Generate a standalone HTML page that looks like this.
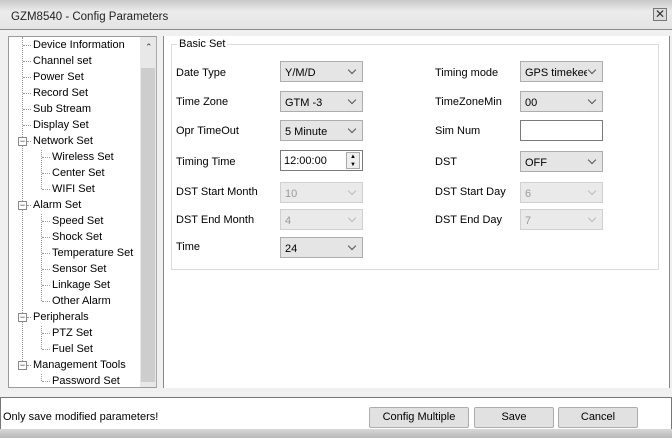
<!DOCTYPE html>
<html><head><style>
*{box-sizing:border-box;margin:0;padding:0}
body{width:672px;height:438px;overflow:hidden;font-family:"Liberation Sans",sans-serif;font-size:11px;color:#000;background:#f0f0f0;position:relative}
.abs{position:absolute}
.title{left:0;top:0;width:672px;height:30px;background:linear-gradient(#c9c9c9,#ececec 40%,#e4e4e4);border-bottom:1px solid #8a8a8a}
.title span{position:absolute;left:11px;top:11px;font-size:11.5px;color:#222}
.close{right:5px;top:8px;width:14px;height:13px;border:1px solid #777;background:#ddd;font-size:12px;line-height:11px;text-align:center;color:#333}
.tree{left:8px;top:36px;width:149px;height:352px;background:#fff;border:1px solid #9a9a9a;border-right:1px solid #aaa}
.sb{left:140px;top:37px;width:16px;height:350px;background:#e8e8e8}
.thumb{left:141px;top:68px;width:14px;height:314px;background:#cdcdcd}
.ti{position:absolute;white-space:nowrap;font-size:11px}
.h1,.h2{position:absolute;width:8px;border-top:1px dotted #999}
.box{position:absolute;width:9px;height:9px;border:1px solid #888;background:#fff;font-size:9px;line-height:6px;text-align:center;color:#333}
.right{left:163px;top:36px;width:507px;height:352px;background:#fff;border-left:1px solid #888;border-right:1px solid #888}
.gb{left:171px;top:44px;width:488px;height:226px;border:1px solid #dcdcdc}
.gbl{left:177px;top:38px;background:#fff;padding:0 2px;font-size:11px}
.lbl{position:absolute;font-size:11px}
.cb{position:absolute;width:83px;height:21px;border:1px solid #adadad;background:#e5e5e5;padding:5px 0 0 4px;font-size:11px}
.cb.d{background:#eaeaea;border-color:#d0d0d0;color:#9a9a9a}
.cb:after{content:"";position:absolute;right:7px;top:5px;width:5px;height:5px;border-right:1px solid #555;border-bottom:1px solid #555;transform:rotate(45deg)}
.cb.d:after{border-color:#bbb}
.btn{position:absolute;top:407px;height:21px;border:1px solid #adadad;background:#e1e1e1;border-radius:2px;text-align:center;line-height:19px;font-size:11px}
</style></head><body>
<div class="abs title"><span>GZM8540 - Config Parameters</span></div>
<div class="abs close">✕</div>
<div class="abs tree"></div>
<div class="abs sb"></div>
<div class="abs thumb"></div>
<div class="abs" style="left:145px;top:42px;font-size:9px;color:#444">⌃</div>
<div class="abs" style="left:22px;top:37px;height:330px;border-left:1px dotted #999"></div>
<div class="abs" style="left:41px;top:150px;height:39px;border-left:1px dotted #999"></div>
<div class="abs" style="left:41px;top:214px;height:87px;border-left:1px dotted #999"></div>
<div class="abs" style="left:41px;top:326px;height:23px;border-left:1px dotted #999"></div>
<div class="abs" style="left:41px;top:374px;height:7px;border-left:1px dotted #999"></div>
<div class="h1" style="left:23px;top:45px"></div>
<div class="h1" style="left:23px;top:61px"></div>
<div class="h1" style="left:23px;top:77px"></div>
<div class="h1" style="left:23px;top:93px"></div>
<div class="h1" style="left:23px;top:109px"></div>
<div class="h1" style="left:23px;top:125px"></div>
<div class="h1" style="left:27px;top:141px;width:4px"></div>
<div class="h1" style="left:27px;top:205px;width:4px"></div>
<div class="h1" style="left:27px;top:317px;width:4px"></div>
<div class="h1" style="left:27px;top:365px;width:4px"></div>
<div class="h2" style="left:42px;top:157px"></div>
<div class="h2" style="left:42px;top:173px"></div>
<div class="h2" style="left:42px;top:189px"></div>
<div class="h2" style="left:42px;top:221px"></div>
<div class="h2" style="left:42px;top:237px"></div>
<div class="h2" style="left:42px;top:253px"></div>
<div class="h2" style="left:42px;top:269px"></div>
<div class="h2" style="left:42px;top:285px"></div>
<div class="h2" style="left:42px;top:301px"></div>
<div class="h2" style="left:42px;top:333px"></div>
<div class="h2" style="left:42px;top:349px"></div>
<div class="h2" style="left:42px;top:381px"></div>
<div class="ti" style="left:33px;top:39px">Device Information</div>
<div class="ti" style="left:33px;top:55px">Channel set</div>
<div class="ti" style="left:33px;top:71px">Power Set</div>
<div class="ti" style="left:33px;top:87px">Record Set</div>
<div class="ti" style="left:33px;top:103px">Sub Stream</div>
<div class="ti" style="left:33px;top:119px">Display Set</div>
<div class="ti" style="left:33px;top:135px">Network Set</div>
<div class="ti" style="left:52px;top:151px">Wireless Set</div>
<div class="ti" style="left:52px;top:167px">Center Set</div>
<div class="ti" style="left:52px;top:183px">WIFI Set</div>
<div class="ti" style="left:33px;top:199px">Alarm Set</div>
<div class="ti" style="left:52px;top:215px">Speed Set</div>
<div class="ti" style="left:52px;top:231px">Shock Set</div>
<div class="ti" style="left:52px;top:247px">Temperature Set</div>
<div class="ti" style="left:52px;top:263px">Sensor Set</div>
<div class="ti" style="left:52px;top:279px">Linkage Set</div>
<div class="ti" style="left:52px;top:295px">Other Alarm</div>
<div class="ti" style="left:33px;top:311px">Peripherals</div>
<div class="ti" style="left:52px;top:327px">PTZ Set</div>
<div class="ti" style="left:52px;top:343px">Fuel Set</div>
<div class="ti" style="left:33px;top:359px">Management Tools</div>
<div class="ti" style="left:52px;top:375px">Password Set</div>
<div class="box" style="left:18px;top:137px">−</div>
<div class="box" style="left:18px;top:201px">−</div>
<div class="box" style="left:18px;top:313px">−</div>
<div class="box" style="left:18px;top:361px">−</div>
<div class="abs right"></div>
<div class="abs gb"></div>
<div class="abs gbl">Basic Set</div>
<div class="lbl" style="left:176px;top:67px">Date Type</div>
<div class="lbl" style="left:176px;top:96px">Time Zone</div>
<div class="lbl" style="left:176px;top:125px">Opr TimeOut</div>
<div class="lbl" style="left:176px;top:156px">Timing Time</div>
<div class="lbl" style="left:176px;top:186px">DST Start Month</div>
<div class="lbl" style="left:176px;top:214px">DST End Month</div>
<div class="lbl" style="left:176px;top:241px">Time</div>
<div class="cb" style="left:280px;top:61px">Y/M/D</div>
<div class="cb" style="left:280px;top:91px">GTM -3</div>
<div class="cb" style="left:280px;top:120px">5 Minute</div>
<div class="abs" style="left:280px;top:150px;width:83px;height:21px;border:1px solid #7a7a7a;background:#fff;padding:4px 0 0 3px">12:00:00</div>
<div class="abs" style="left:346px;top:152px;width:14px;height:17px;border:1px solid #aaa;background:#eee;font-size:6px;line-height:8px;text-align:center">▲<br>▼</div>
<div class="cb d" style="left:280px;top:182px">10</div>
<div class="cb d" style="left:280px;top:209px">4</div>
<div class="cb" style="left:280px;top:237px">24</div>
<div class="lbl" style="left:435px;top:67px">Timing mode</div>
<div class="lbl" style="left:435px;top:96px">TimeZoneMin</div>
<div class="lbl" style="left:435px;top:125px">Sim Num</div>
<div class="lbl" style="left:435px;top:156px">DST</div>
<div class="lbl" style="left:435px;top:186px">DST Start Day</div>
<div class="lbl" style="left:435px;top:214px">DST End Day</div>
<div class="cb" style="left:520px;top:61px"><span style="display:block;width:62px;overflow:hidden;white-space:nowrap">GPS timekeeping</span></div>
<div class="cb" style="left:520px;top:91px">00</div>
<div class="abs" style="left:520px;top:120px;width:83px;height:21px;border:1px solid #7a7a7a;background:#fff"></div>
<div class="cb" style="left:520px;top:151px">OFF</div>
<div class="cb d" style="left:520px;top:182px">6</div>
<div class="cb d" style="left:520px;top:209px">7</div>
<div class="abs" style="left:0;top:388px;width:672px;height:9px;background:#f0f0f0"></div>
<div class="abs" style="left:0;top:397px;width:672px;height:32px;background:#fff;border-top:1px solid #777;border-left:1px solid #777;border-right:1px solid #777"></div>
<div class="abs" style="left:0;top:429px;width:672px;height:9px;background:linear-gradient(#d8d8d8,#b8b8b8)"></div>
<div class="abs" style="left:3px;top:411px">Only save modified parameters!</div>
<div class="btn" style="left:369px;width:100px">Config Multiple</div>
<div class="btn" style="left:474px;width:80px">Save</div>
<div class="btn" style="left:558px;width:80px">Cancel</div>
</body></html>
